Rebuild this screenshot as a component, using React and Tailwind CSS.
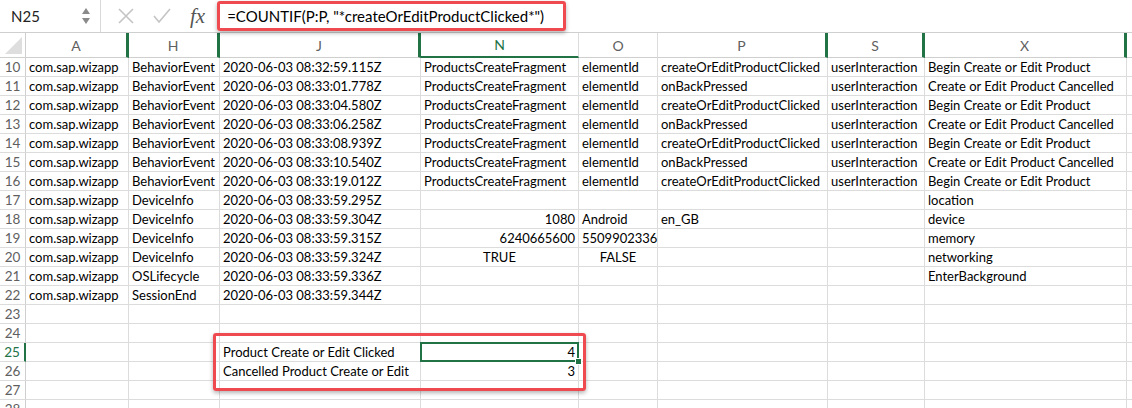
import React from "react";

const COLS = "grid grid-cols-[26px_103px_91px_201px_158px_79px_170px_97px_202px_1fr]";

const rows = [
  [10, "com.sap.wizapp", "BehaviorEvent", "2020-06-03 08:32:59.115Z", "ProductsCreateFragment", "elementId", "createOrEditProductClicked", "userInteraction", "Begin Create or Edit Product"],
  [11, "com.sap.wizapp", "BehaviorEvent", "2020-06-03 08:33:01.778Z", "ProductsCreateFragment", "elementId", "onBackPressed", "userInteraction", "Create or Edit Product Cancelled"],
  [12, "com.sap.wizapp", "BehaviorEvent", "2020-06-03 08:33:04.580Z", "ProductsCreateFragment", "elementId", "createOrEditProductClicked", "userInteraction", "Begin Create or Edit Product"],
  [13, "com.sap.wizapp", "BehaviorEvent", "2020-06-03 08:33:06.258Z", "ProductsCreateFragment", "elementId", "onBackPressed", "userInteraction", "Create or Edit Product Cancelled"],
  [14, "com.sap.wizapp", "BehaviorEvent", "2020-06-03 08:33:08.939Z", "ProductsCreateFragment", "elementId", "createOrEditProductClicked", "userInteraction", "Begin Create or Edit Product"],
  [15, "com.sap.wizapp", "BehaviorEvent", "2020-06-03 08:33:10.540Z", "ProductsCreateFragment", "elementId", "onBackPressed", "userInteraction", "Create or Edit Product Cancelled"],
  [16, "com.sap.wizapp", "BehaviorEvent", "2020-06-03 08:33:19.012Z", "ProductsCreateFragment", "elementId", "createOrEditProductClicked", "userInteraction", "Begin Create or Edit Product"],
  [17, "com.sap.wizapp", "DeviceInfo", "2020-06-03 08:33:59.295Z", "", "", "", "", "location"],
  [18, "com.sap.wizapp", "DeviceInfo", "2020-06-03 08:33:59.304Z", { t: "1080", a: "r" }, "Android", "en_GB", "", "device"],
  [19, "com.sap.wizapp", "DeviceInfo", "2020-06-03 08:33:59.315Z", { t: "6240665600", a: "r" }, { t: "5509902336", a: "r" }, "", "", "memory"],
  [20, "com.sap.wizapp", "DeviceInfo", "2020-06-03 08:33:59.324Z", { t: "TRUE", a: "c" }, { t: "FALSE", a: "c" }, "", "", "networking"],
  [21, "com.sap.wizapp", "OSLifecycle", "2020-06-03 08:33:59.336Z", "", "", "", "", "EnterBackground"],
  [22, "com.sap.wizapp", "SessionEnd", "2020-06-03 08:33:59.344Z", "", "", "", "", ""],
  [23, "", "", "", "", "", "", "", ""],
  [24, "", "", "", "", "", "", "", ""],
  [25, "", "", "Product Create or Edit Clicked", { t: "4", a: "r", sel: true }, "", "", "", ""],
  [26, "", "", "Cancelled Product Create or Edit", { t: "3", a: "r" }, "", "", "", ""],
  [27, "", "", "", "", "", "", "", ""],
  [28, "", "", "", "", "", "", "", ""],
];

const headers = [
  { l: "A", g: true },
  { l: "H", g: true },
  { l: "J", g: true },
  { l: "N", g: false, sel: true },
  { l: "O", g: false },
  { l: "P", g: true },
  { l: "S", g: true },
  { l: "X", g: true },
];

function Cell({ v }) {
  const o = typeof v === "object" ? v : { t: v, a: "l" };
  const align = o.a === "r" ? "text-right" : o.a === "c" ? "text-center" : "text-left";
  return (
    <div className={`relative h-[19px] border-r border-b border-[#dcdcdc] px-[3px] overflow-visible whitespace-nowrap text-[13px] leading-[19px] text-black ${align}`}>
      {o.t}
      {o.sel && (
        <div className="absolute z-10 left-[-1px] top-[-1px] right-[-1px] bottom-[-1px] border-2 border-[#217346] pointer-events-none">
          <div className="absolute right-[-5px] bottom-[-5px] w-[7px] h-[7px] bg-[#217346] border border-white" />
        </div>
      )}
    </div>
  );
}

export default function App() {
  return (
    <div className="relative w-[1132px] h-[408px] overflow-hidden bg-white font-['Lato','Liberation_Sans',sans-serif]">
      {/* Formula toolbar */}
      <div className="flex h-[33px] items-center border-b border-[#cfcfcf] bg-white">
        <div className="flex h-full w-[101px] items-center justify-between border-r border-[#dadada] pl-[11px] pr-[5px]">
          <span className="text-[15px] text-[#222]">N25</span>
          <svg width="12" height="24" viewBox="0 0 12 24" className="mr-[3px]">
            <path d="M6 4 L10 10 L2 10 Z" fill="#8a8a8a" />
            <path d="M6 20 L10 14 L2 14 Z" fill="#8a8a8a" />
          </svg>
        </div>
        <div className="flex h-full items-center pl-[16px] gap-[17px]">
          <svg width="18" height="18" viewBox="0 0 18 18">
            <path d="M2 2 L16 16 M16 2 L2 16" stroke="#c4c4c4" strokeWidth="1.6" fill="none" />
          </svg>
          <svg width="20" height="18" viewBox="0 0 20 18">
            <path d="M2 9 L7 15 L18 2" stroke="#c4c4c4" strokeWidth="1.6" fill="none" />
          </svg>
          <span className="font-['Liberation_Serif',serif] italic text-[21px] leading-none text-[#555] ml-[1px]">fx</span>
        </div>
        <div className="ml-[14px] flex-1 pl-[8px] text-[15px] text-black">
          =COUNTIF(P:P, "*createOrEditProductClicked*")
        </div>
      </div>

      {/* Column headers */}
      <div className={`${COLS} h-[25px] bg-white`}>
        <div className="relative border-r border-b border-[#cfcfcf]">
          <svg width="25" height="24" className="absolute left-0 top-0">
            <path d="M22 4 L22 21 L5 21 Z" fill="#dedede" />
          </svg>
        </div>
        {headers.map((h) => (
          <div
            key={h.l}
            className={`relative flex items-center justify-center border-b ${h.sel ? "border-b-2 border-b-[#217346] text-[#217346]" : "border-b-[#cfcfcf] text-[#5f5f5f]"} text-[14px] ${h.g ? "border-r-[3px] border-r-[#217346]" : "border-r border-r-[#dcdcdc]"}`}
          >
            {h.l}
          </div>
        ))}
        <div className="border-b border-[#cfcfcf]" />
      </div>

      {/* Rows */}
      {rows.map((r) => {
        const [n, ...cells] = r;
        const sel = n === 25;
        return (
          <div key={n} className={COLS}>
            <div
              className={`h-[19px] border-b border-[#dcdcdc] text-center text-[13.5px] leading-[19px] ${sel ? "border-r-2 border-r-[#217346] text-[#217346]" : "border-r border-r-[#cfcfcf] text-[#5f5f5f]"}`}
            >
              {n}
            </div>
            {cells.map((c, i) => (
              <Cell key={i} v={c} />
            ))}
            <div className="h-[19px] border-b border-[#dcdcdc]" />
          </div>
        );
      })}

      {/* Red annotation boxes */}
      <div className="absolute left-[217px] top-[1px] w-[349px] h-[30px] rounded-[3px] border-[3px] border-[#ee4a4f] shadow-[0_2px_4px_rgba(0,0,0,0.3)] pointer-events-none" />
      <div className="absolute left-[213px] top-[333px] w-[373px] h-[58px] rounded-[3px] border-[3px] border-[#ee4a4f] shadow-[0_2px_4px_rgba(0,0,0,0.3)] pointer-events-none" />
    </div>
  );
}
